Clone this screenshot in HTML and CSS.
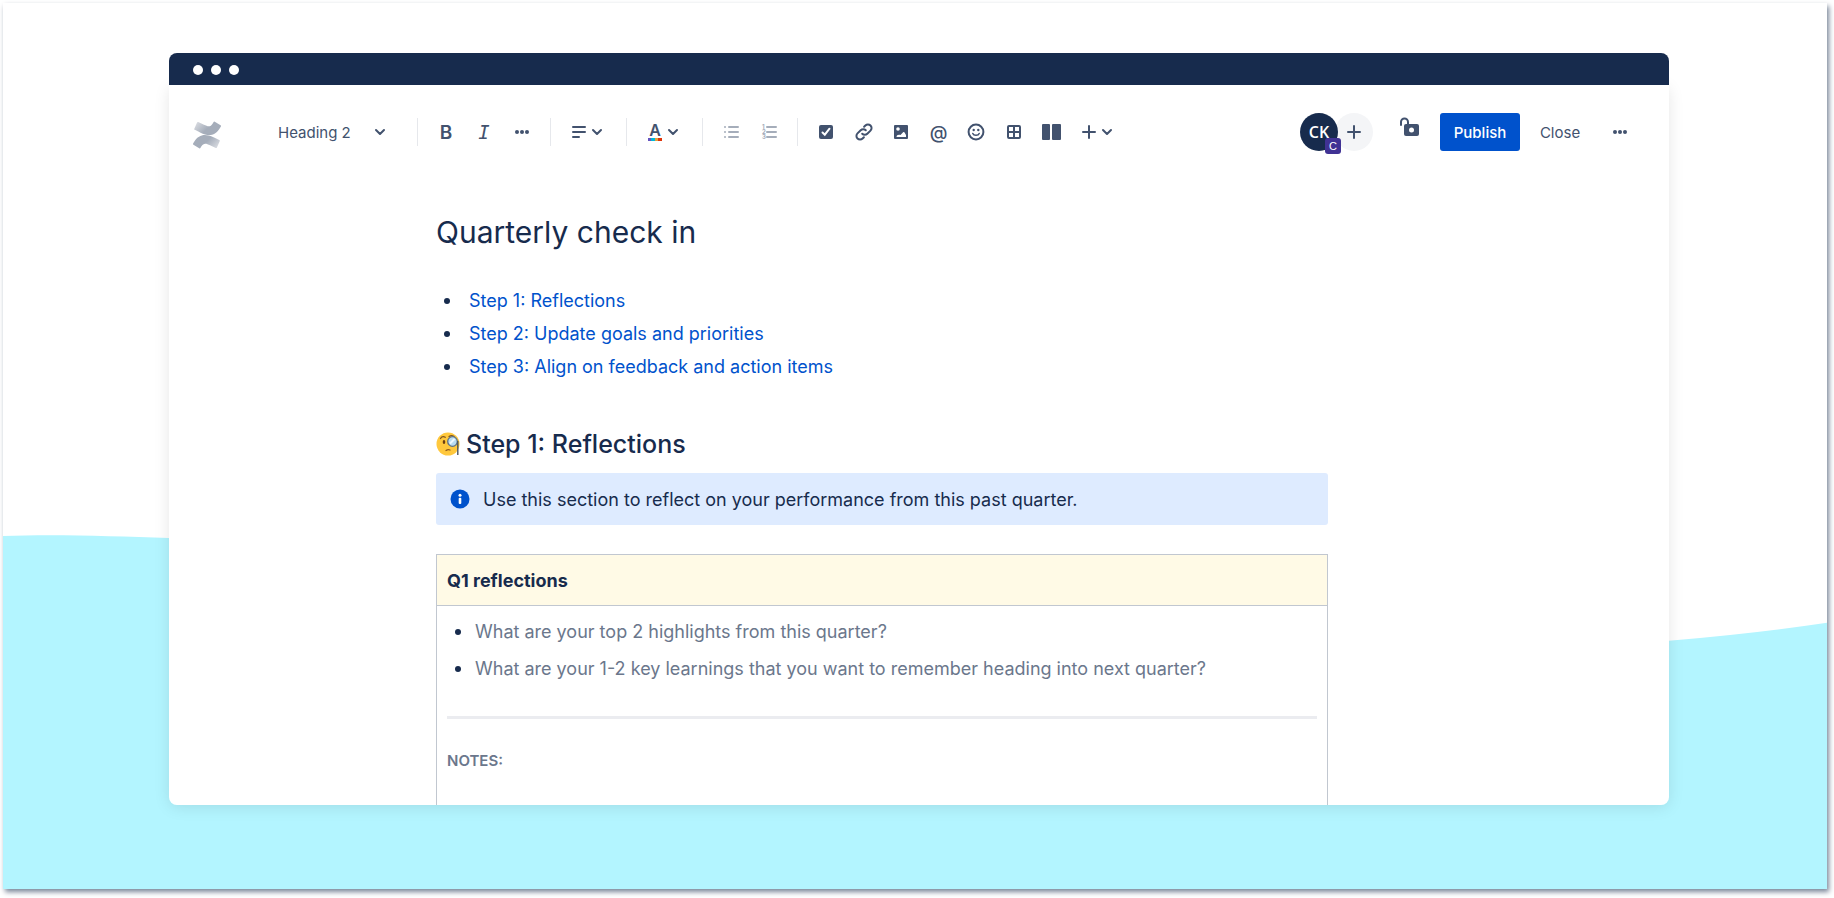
FILE: index.html
```html
<!DOCTYPE html>
<html lang="en">
<head>
  <meta charset="utf-8" />
  <title>Quarterly check in</title>
  <meta name="viewport" content="width=device-width, initial-scale=1" />
  <link rel="stylesheet" href="styles.css">
</head>

<body>
  <div class="stage">
    <svg class="wave" viewBox="0 0 1824 355" preserveAspectRatio="none" aria-hidden="true">
      <path d="M0 1 C50 -1 110 1 166 3 C700 20 1000 150 1666 106 Q1750 99 1824 88 V355 H0Z" fill="#b3f5ff" />
    </svg>

    <div class="window">
      <div class="titlebar">
        <span class="dot"></span>
        <span class="dot"></span>
        <span class="dot"></span>
      </div>

      <header class="toolbar">
        <a class="logo" href="#" aria-label="Confluence">
          <svg width="28" height="28" viewBox="0 0 256 246">
            <defs>
              <linearGradient id="fade" x1="1" y1="0.7" x2="0.2" y2="0.3">
                <stop offset="0" stop-color="#d5d8de" />
                <stop offset="0.6" stop-color="#a5adba" />
              </linearGradient>
              <path id="ribbon" d="M9.3 187.3C6.6 191.6 3.7 196.6 1.1 200.6A8.1 8.1 0 0 0 3.9 211.7L56.7 244.2A8.1 8.1 0 0 0 67.9 241.4C70 237.9 72.8 233.3 75.7 228.4C96.7 193.8 117.7 198 155.7 216.2L208 241.1A8.1 8.1 0 0 0 218.9 237L244 180.1A8.1 8.1 0 0 0 240 169.5C229 164.3 207 153.9 187.2 144.3C116 109.8 55.5 112 9.3 187.3Z" />
            </defs>
            <use href="#ribbon" fill="url(#fade)" />
            <use href="#ribbon" fill="url(#fade)" transform="rotate(180 128 122.8)" />
          </svg>
        </a>

        <label class="style-picker">
          <select aria-label="Text style">
            <option>Heading 2</option>
            <option>Heading 1</option>
            <option>Normal text</option>
          </select>
          <svg class="chevron" viewBox="0 0 12 12"><path d="M2 4l4 4 4-4" /></svg>
        </label>

        <div class="group">
          <button class="tool bold" aria-label="Bold">B</button>
          <button class="tool italic" aria-label="Italic">I</button>
          <button class="tool" aria-label="More formatting">
            <svg viewBox="0 0 24 24"><circle cx="7" cy="12" r="2" /><circle cx="12" cy="12" r="2" /><circle cx="17" cy="12" r="2" /></svg>
          </button>
        </div>

        <div class="group">
          <button class="tool menu" aria-label="Alignment">
            <svg viewBox="0 0 24 24"><path class="line" d="M6 7h12M6 12h12M6 17h6" /></svg>
            <svg class="chevron" viewBox="0 0 12 12"><path d="M2 4l4 4 4-4" /></svg>
          </button>
        </div>

        <div class="group">
          <button class="tool menu" aria-label="Text color">
            <span class="color-letter">A</span>
            <svg class="chevron" viewBox="0 0 12 12"><path d="M2 4l4 4 4-4" /></svg>
          </button>
        </div>

        <div class="group">
          <button class="tool" aria-label="Bullet list" disabled>
            <svg viewBox="0 0 24 24"><circle cx="6" cy="7" r="1" /><circle cx="6" cy="12" r="1" /><circle cx="6" cy="17" r="1" /><path class="line" d="M10 7h9M10 12h9M10 17h9" /></svg>
          </button>
          <button class="tool" aria-label="Numbered list" disabled>
            <svg viewBox="0 0 24 24"><text x="5" y="9">1</text><text x="5" y="14">2</text><text x="5" y="19">3</text><path class="line" d="M10 7h9M10 12h9M10 17h9" /></svg>
          </button>
        </div>

        <div class="group insert">
          <button class="tool" aria-label="Action item">
            <svg viewBox="0 0 24 24"><rect x="5" y="5" width="14" height="14" rx="2" /><path class="cut" d="M8.5 12.5l2.3 2.2 4.7-6" /></svg>
          </button>
          <button class="tool" aria-label="Link">
            <svg viewBox="0 0 24 24"><path class="line" d="M10.2 13.8a3.6 3.6 0 0 0 5.1 0l3.2-3.2a3.6 3.6 0 0 0-5.1-5.1l-1.3 1.3M13.8 10.2a3.6 3.6 0 0 0-5.1 0l-3.2 3.2a3.6 3.6 0 0 0 5.1 5.1l1.3-1.3" /></svg>
          </button>
          <button class="tool" aria-label="Image">
            <svg viewBox="0 0 24 24"><rect x="5" y="5" width="14" height="14" rx="1" /><circle cx="9" cy="9" r="1.8" fill="#fff" /><path fill="#fff" d="M7.5 17c0-1.6 1.5-2.5 3-2.2l1 .2 2.6-2.7c.5-.5 1.2-.3 1.5.2L17 15v2z" /></svg>
          </button>
          <button class="tool mention" aria-label="Mention">@</button>
          <button class="tool" aria-label="Emoji">
            <svg viewBox="0 0 24 24"><circle class="line" cx="12" cy="12" r="7.4" /><circle cx="9.7" cy="10" r="1.2" /><circle cx="14.3" cy="10" r="1.2" /><path class="thin" d="M8.8 13.5c.8 2.4 5.6 2.4 6.4 0" /></svg>
          </button>
          <button class="tool" aria-label="Table">
            <svg viewBox="0 0 24 24"><rect class="line" x="6" y="6" width="12" height="12" rx="1" /><path class="line" d="M12 6v12M6 12h12" /></svg>
          </button>
          <button class="tool" aria-label="Layouts">
            <svg viewBox="0 0 24 24"><rect x="3" y="4" width="8" height="16" rx="1" /><rect x="13" y="4" width="9" height="16" rx="1" /></svg>
          </button>
          <button class="tool menu" aria-label="Insert">
            <svg viewBox="0 0 24 24"><path class="line" d="M12 6v12M6 12h12" /></svg>
            <svg class="chevron" viewBox="0 0 12 12"><path d="M2 4l4 4 4-4" /></svg>
          </button>
        </div>

        <div class="actions">
          <div class="people">
            <div class="avatar">CK<span class="badge">C</span></div>
            <button class="invite" aria-label="Invite">
              <svg viewBox="0 0 24 24"><path class="line" d="M12 6v12M6 12h12" /></svg>
            </button>
          </div>
          <button class="tool lock" aria-label="Restrictions">
            <svg viewBox="0 0 24 24"><path class="line" d="M3 9V6a3.5 3.5 0 0 1 7 0v3" /><rect x="6" y="8" width="15" height="12" rx="2" /><circle cx="13.5" cy="14" r="2.5" fill="#fff" /></svg>
          </button>
          <button class="publish">Publish</button>
          <button class="close">Close</button>
          <button class="tool" aria-label="More actions">
            <svg viewBox="0 0 24 24"><circle cx="7" cy="12" r="2" /><circle cx="12" cy="12" r="2" /><circle cx="17" cy="12" r="2" /></svg>
          </button>
        </div>
      </header>

      <main class="document">
        <h1>Quarterly check in</h1>
        <ul class="steps">
          <li><a href="#step1">Step 1: Reflections</a></li>
          <li><a href="#step2">Step 2: Update goals and priorities</a></li>
          <li><a href="#step3">Step 3: Align on feedback and action items</a></li>
        </ul>

        <h2 id="step1">
          <svg class="emoji" viewBox="0 0 24 24" aria-hidden="true">
            <circle cx="12" cy="12" r="11.5" fill="#ffc83d" />
            <path d="M4.5 6.5c1-1.6 3-2.2 4.8-1.2M13 4.5c1.5-1 3.5-1 5 0" fill="none" stroke="#7d5522" stroke-width="1.3" stroke-linecap="round" />
            <ellipse cx="8" cy="10" rx="1.3" ry="2" fill="#6b3f12" />
            <path d="M10 18.5c1.2-.8 2.600-1 4-.5" fill="none" stroke="#8f5a1c" stroke-width="1.3" stroke-linecap="round" />
            <circle cx="16.5" cy="9.5" r="4.8" fill="#b9dcf2" stroke="#5e7284" stroke-width="1.3" />
            <path d="M14 11.5l4.5-4.5" stroke="#eef8ff" stroke-width="2" />
            <path d="M21.800 9v14" stroke="#4a5560" stroke-width="1.4" />
          </svg>
          Step 1: Reflections
        </h2>

        <div class="panel">
          <svg viewBox="0 0 20 20" aria-hidden="true"><circle cx="10" cy="10" r="9.5" fill="#0052cc" /><circle cx="10" cy="6.3" r="1.5" fill="#fff" /><rect x="8.7" y="8.7" width="2.6" height="6.3" rx="1" fill="#fff" /></svg>
          <p>Use this section to reflect on your performance from this past quarter.</p>
        </div>

        <table class="reflections">
          <thead>
            <tr><th scope="col">Q1 reflections</th></tr>
          </thead>
          <tbody>
            <tr>
              <td>
                <ul class="questions">
                  <li>What are your top 2 highlights from this quarter?</li>
                  <li>What are your 1-2 key learnings that you want to remember heading into next quarter?</li>
                </ul>
                <hr>
                <h3>NOTES:</h3>
              </td>
            </tr>
          </tbody>
        </table>
      </main>
    </div>
  </div>
</body>
</html>
```
FILE: styles.css
```css
* {
  box-sizing: border-box;
  padding: 0;
  margin: 0;
}

body {
  padding: 3px 7px 9px 3px;
  background: #fff;
  color: #172b4d;
  font-family: Inter, "Liberation Sans", sans-serif;
  font-size: 18px;
}

/* backdrop */
.stage {
  position: relative;
  display: flex;
  height: calc(100vh - 12px);
  padding: 50px 158px 84px 166px;
  background: #fff;
  box-shadow: 2px 3px 5px #7a8699;
}

.wave {
  position: absolute;
  left: 0;
  bottom: 0;
  width: 100%;
  height: 40%;
}

/* window shadow, starts under the title bar */
.stage::before {
  content: "";
  position: absolute;
  z-index: 1;
  inset: 82px 158px 84px 166px;
  border-radius: 8px;
  box-shadow: 0 2px 16px rgba(0, 0, 0, 0.1);
}

.window {
  position: relative;
  z-index: 2;
  display: flex;
  flex: 1;
  flex-direction: column;
  min-width: 0;
  background: #fff;
  border-radius: 8px;
  overflow: hidden;
}

.titlebar {
  display: flex;
  flex: none;
  align-items: center;
  gap: 8px;
  height: 32px;
  padding: 2px 24px 0;
  background: #172b4d;
}

.dot {
  width: 10px;
  height: 10px;
  border-radius: 50%;
  background: #fff;
}

/* toolbar */
.toolbar {
  display: flex;
  flex: none;
  align-items: center;
  height: 94px;
  padding: 0 37px 0 24px;
}

button,
select {
  border: none;
  background: none;
  color: #42526e;
  font-family: inherit;
  font-size: 15px;
  cursor: pointer;
}

.logo {
  height: 28px;
  margin-top: 6px;
}

.style-picker {
  display: flex;
  align-items: center;
  width: 109px;
  margin: 0 30px 0 57px;
}

.style-picker select {
  width: 96px;
  height: 28px;
  appearance: none;
}

.group {
  display: flex;
  align-items: center;
  gap: 14px;
  height: 28px;
  margin-right: 16px;
  padding-left: 16px;
  border-left: 1px solid #e6e8ec;
}

.insert {
  gap: 0;
  justify-content: space-between;
  width: 323px;
}

.tool {
  display: flex;
  align-items: center;
  justify-content: center;
  width: 24px;
  height: 24px;
}

.tool:disabled {
  color: #a5adba;
}

.menu {
  justify-content: flex-start;
  width: 43px;
}

.tool svg,
.invite svg {
  flex: none;
  width: 24px;
  height: 24px;
  fill: currentColor;
}

.tool svg text {
  font-size: 6px;
  font-weight: 700;
}

.line,
.thin,
.cut {
  fill: none;
  stroke: currentColor;
  stroke-width: 2;
  stroke-linecap: round;
}

.thin {
  stroke-width: 1.5;
}

.cut {
  stroke: #fff;
}

.chevron,
.tool .chevron {
  flex: none;
  width: 12px;
  height: 12px;
  fill: none;
  stroke: #42526e;
  stroke-width: 2;
  stroke-linecap: round;
  stroke-linejoin: round;
}

.bold {
  font-size: 19px;
  font-weight: 600;
}

.italic {
  font-family: "DejaVu Sans Mono", monospace;
  font-size: 19px;
  font-style: italic;
}

.mention {
  font-size: 18px;
  font-weight: 500;
}

.color-letter {
  width: 14px;
  height: 18px;
  margin: 0 5px;
  background: linear-gradient(90deg, #6554c0 25%, #00b8d9 25% 50%, #e2a03f 50% 75%, #de350b 75%) bottom / 14px 3px no-repeat;
  font-size: 16px;
  font-weight: 600;
  line-height: 14px;
}

.actions {
  display: flex;
  align-items: center;
  margin-left: auto;
}

.people {
  display: flex;
  margin-right: 25px;
}

.avatar {
  position: relative;
  z-index: 1;
  width: 38px;
  height: 38px;
  border-radius: 50%;
  background: #172b4d;
  color: #fff;
  font: 600 16px/38px "Open Sans", sans-serif;
  text-align: center;
}

.badge {
  position: absolute;
  right: -3px;
  bottom: -3px;
  width: 16px;
  height: 16px;
  border-radius: 3px;
  background: #403294;
  font: 11px/16px "Liberation Sans", sans-serif;
}

.invite {
  display: flex;
  align-items: center;
  justify-content: center;
  width: 38px;
  height: 38px;
  margin-left: -3px;
  border-radius: 50%;
  background: #f4f5f7;
}

.lock {
  height: 30px;
  margin-right: 18px;
  align-self: flex-start;
}

.publish {
  width: 80px;
  height: 38px;
  border-radius: 3px;
  background: #0052cc;
  color: #fff;
  font-weight: 500;
}

.close {
  width: 80px;
  height: 38px;
  margin-right: 8px;
}

/* page body */
.document {
  flex: 1;
  min-height: 0;
  padding: 29px 341px 0 267px;
  overflow: hidden;
}

h1 {
  font-size: 30px;
  font-weight: 400;
  line-height: 48px;
}

ul {
  list-style: none;
}

li {
  position: relative;
}

li::before {
  content: "";
  position: absolute;
  top: 50%;
  left: -25px;
  width: 6px;
  height: 6px;
  margin-top: -3px;
  border-radius: 50%;
  background: #172b4d;
}

.steps {
  margin-top: 28px;
  padding-left: 33px;
}

.steps li {
  line-height: 33px;
}

.steps a {
  color: #0052cc;
  text-decoration: none;
}

h2 {
  display: flex;
  align-items: center;
  gap: 6px;
  margin-top: 43px;
  font-size: 25px;
  font-weight: 500;
  line-height: 36px;
}

.emoji {
  width: 24px;
  height: 24px;
}

.panel {
  display: flex;
  align-items: center;
  gap: 13px;
  height: 52px;
  margin-top: 11px;
  padding: 0 14px;
  border-radius: 3px;
  background: #deebff;
}

.panel svg {
  width: 20px;
  height: 20px;
}

.reflections {
  width: 100%;
  margin-top: 29px;
  border-collapse: collapse;
}

.reflections th,
.reflections td {
  padding: 0 10px;
  border: 1px solid #c1c7d0;
  text-align: left;
}

.reflections th {
  height: 51px;
  background: #fffae6;
  font-weight: 700;
}

.reflections td {
  padding-top: 7px;
  padding-bottom: 80px;
}

.questions {
  padding-left: 28px;
  color: #6b778c;
}

.questions li {
  line-height: 37px;
}

.questions li::before {
  left: -20px;
}

hr {
  height: 3px;
  margin: 29px 0 30px;
  border: none;
  background: #ebecf0;
}

h3 {
  color: #6b778c;
  font-size: 15px;
  font-weight: 600;
  line-height: 24px;
}
```
